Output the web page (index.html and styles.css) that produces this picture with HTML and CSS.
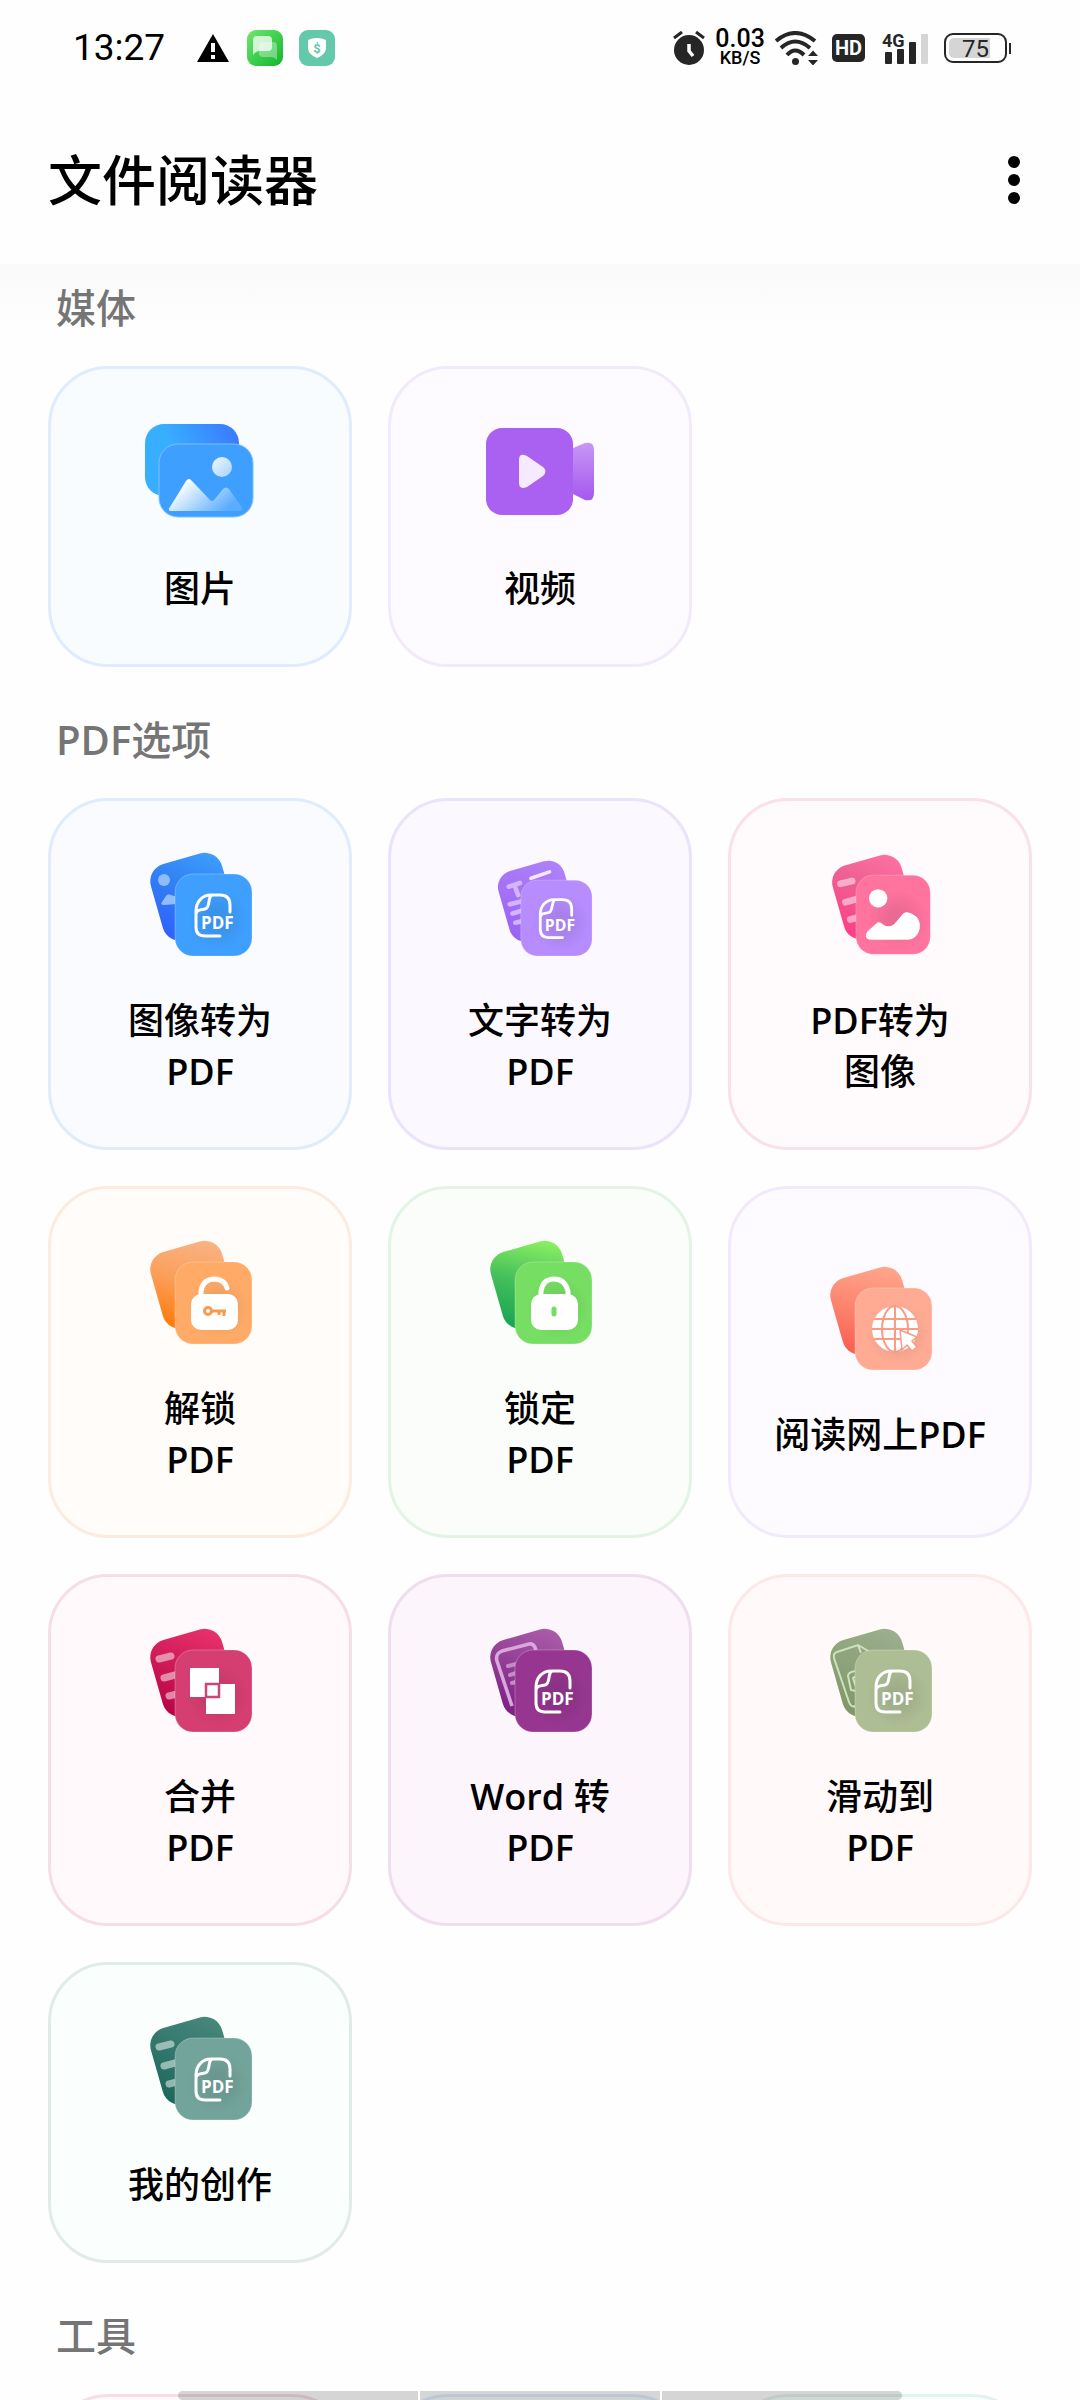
FILE: index.html
```html
<!DOCTYPE html>
<html lang="zh-CN">
<head>
    <meta charset="UTF-8">
    <meta name="viewport" content="width=device-width, initial-scale=1.0">
    <title>文件阅读器</title>
    <link rel="stylesheet" href="styles.css">
</head>
<body>

<!-- shared icon parts -->
<svg class="defs" width="0" height="0" aria-hidden="true">
    <defs>
        <linearGradient id="gPic" x1="0" y1="0.5" x2="1" y2="0.2"><stop offset="0.3" stop-color="#38aeff"/><stop offset="1" stop-color="#3a7bff"/></linearGradient>
        <linearGradient id="gSnow" x1="0" y1="0" x2="1" y2="0.5"><stop offset="0.2" stop-color="#fff"/><stop offset="1" stop-color="#fff" stop-opacity="0.15"/></linearGradient>
        <linearGradient id="gSun" x1="0" y1="0" x2="1" y2="1"><stop offset="0" stop-color="#f2f8ff"/><stop offset="1" stop-color="#a5d1ff"/></linearGradient>
        <linearGradient id="gLens" x1="0" y1="0" x2="0" y2="1"><stop offset="0" stop-color="#c797f5"/><stop offset="1" stop-color="#a557ef"/></linearGradient>
        <linearGradient id="gBlue" x1="1" y1="0" x2="0.2" y2="1"><stop offset="0" stop-color="#3fa2ff"/><stop offset="0.5" stop-color="#3280f3"/><stop offset="1" stop-color="#2f63fa"/></linearGradient>
        <linearGradient id="gViolet" x1="1" y1="0" x2="0.2" y2="1"><stop offset="0" stop-color="#b084fb"/><stop offset="1" stop-color="#9c63f3"/></linearGradient>
        <linearGradient id="gPink" x1="1" y1="0" x2="0.2" y2="1"><stop offset="0" stop-color="#ff73a3"/><stop offset="0.5" stop-color="#ee5f91"/><stop offset="1" stop-color="#ff3f86"/></linearGradient>
        <linearGradient id="gOrange" x1="0.8" y1="0" x2="0.3" y2="1"><stop offset="0" stop-color="#f9b384"/><stop offset="0.5" stop-color="#fb9e58"/><stop offset="1" stop-color="#ff7d10"/></linearGradient>
        <linearGradient id="gGreen" x1="0.8" y1="0" x2="0.3" y2="1"><stop offset="0" stop-color="#8af062"/><stop offset="0.5" stop-color="#45bf5a"/><stop offset="1" stop-color="#1ba654"/></linearGradient>
        <linearGradient id="gCoral" x1="0.8" y1="0" x2="0.3" y2="1"><stop offset="0" stop-color="#ffa68c"/><stop offset="0.5" stop-color="#fc8670"/><stop offset="1" stop-color="#fb6153"/></linearGradient>
        <linearGradient id="gCrimson" x1="1" y1="0" x2="0.2" y2="1"><stop offset="0" stop-color="#ea3570"/><stop offset="1" stop-color="#bb0646"/></linearGradient>
        <linearGradient id="gPurple" x1="1" y1="0" x2="0.2" y2="1"><stop offset="0" stop-color="#ac62ab"/><stop offset="1" stop-color="#7f2085"/></linearGradient>
        <linearGradient id="gOlive" x1="1" y1="0" x2="0.2" y2="1"><stop offset="0" stop-color="#9eb092"/><stop offset="1" stop-color="#809868"/></linearGradient>
        <linearGradient id="gTeal" x1="1" y1="0" x2="0.2" y2="1"><stop offset="0" stop-color="#4b897e"/><stop offset="1" stop-color="#1d685c"/></linearGradient>
        <linearGradient id="gChat" x1="0" y1="0" x2="1" y2="1"><stop offset="0" stop-color="#6ee86f"/><stop offset="1" stop-color="#12b52f"/></linearGradient>
        <radialGradient id="gShade"><stop offset="0.3" stop-color="#000" stop-opacity="0.08"/><stop offset="1" stop-color="#000" stop-opacity="0"/></radialGradient>
    </defs>
    <symbol id="back" viewBox="0 0 108 108" overflow="visible">
        <rect width="74" height="79" rx="18" transform="translate(0 19) rotate(-16)"/>
    </symbol>
    <symbol id="front" viewBox="0 0 108 108" overflow="visible">
        <rect x="29" y="24" width="77" height="82" rx="18" stroke="#fff" stroke-opacity="0.25"/>
        <circle cx="72" cy="70" r="31" fill="url(#gShade)"/>
    </symbol>
    <symbol id="lines" viewBox="0 0 108 108" overflow="visible">
        <path d="M13 33l12-3M18 52l11-3M23 70l8-2" stroke="#fff" stroke-opacity="0.5" stroke-width="7" stroke-linecap="round" fill="none"/>
    </symbol>
    <symbol id="page" viewBox="0 0 108 108" overflow="visible">
        <path class="line" d="M84 62V55Q84 45 74 45H65C56 45 50 52 50 61V77Q50 86 59 86H74M67 45C61 45 65 58 59 59S51 60 50 64"/>
    </symbol>
</svg>

<div class="status-bar">
    <div class="status-left">
        <span class="clock">13:27</span>
        <svg class="warn" width="32" height="28" viewBox="0 0 32 28"><path d="M16 0L32 28H0z"/><path d="M14 9h4v9h-4zM14 21h4v4h-4z" fill="#fff"/></svg>
        <svg width="36" height="36" viewBox="0 0 36 36"><rect width="36" height="36" rx="9" fill="url(#gChat)"/><path d="M6 25V10Q6 6 10 6H21Q25 6 25 10V17Q25 21 21 21H12Q9 21 6 25z" fill="#fff" fill-opacity="0.75"/><path d="M30 30V16Q30 12 26 12H16Q12 12 12 16V23Q12 27 16 27H24Q27 27 30 30z" fill="#fff" fill-opacity="0.35"/></svg>
        <svg width="36" height="36" viewBox="0 0 36 36"><rect width="36" height="36" rx="9" fill="#64c8aa"/><path d="M18 8Q23 8 27 10V19Q26 25 18 28Q10 25 9 19V10Q13 8 18 8z" fill="#fff"/><text class="dollar" x="18" y="23">$</text></svg>
    </div>
    <div class="status-right">
        <svg width="32" height="34" viewBox="0 0 32 34"><circle cx="16" cy="19" r="15" fill="#262626"/><path d="M1 7l8-6M31 7l-8-6" stroke="#262626" stroke-width="3"/><path d="M16 13v7l4 5" fill="none" stroke="#fff" stroke-width="3.500"/></svg>
        <div class="speed"><span class="rate">0.03</span><span class="unit">KB/S</span></div>
        <svg width="44" height="34" viewBox="0 0 44 34"><g fill="none" stroke="#262626" stroke-width="4"><path d="M1 10Q20-6 40 10"/><path d="M6 17Q20 4 35 17"/><path d="M12 24Q20 15 29 24"/></g><circle cx="20.500" cy="30.500" r="3.500" fill="#262626"/><path d="M33 25l5-5.500 5 5.500zM33 29l5 5.500 5-5.500z" fill="#262626"/></svg>
        <span class="hd">HD</span>
        <svg class="signal" width="46" height="34" viewBox="0 0 46 34"><text class="net" x="0" y="16">4G</text><rect x="3" y="21" width="7" height="12" rx="1"/><rect x="15" y="18" width="7" height="15" rx="1"/><rect x="27" y="11" width="7" height="22" rx="1"/><rect x="39" y="3" width="7" height="30" rx="1" fill="#d5d5d5"/></svg>
        <div class="battery"><span class="level">75</span></div>
    </div>
</div>

<header class="app-bar">
    <h1>文件阅读器</h1>
    <button class="more" type="button" aria-label="更多">
        <svg width="12" height="48" viewBox="0 0 12 48"><circle cx="6" cy="6" r="6"/><circle cx="6" cy="24" r="6"/><circle cx="6" cy="42" r="6"/></svg>
    </button>
</header>

<main class="content">
    <section>
        <h2>媒体</h2>
        <div class="grid">
            <button type="button" class="card sky">
                <svg class="icon" viewBox="0 0 108 108">
                    <rect x="-1" y="6" width="94" height="72" rx="19" fill="url(#gPic)"/>
                    <rect x="13" y="26" width="94" height="73" rx="19" fill="#3f9fff" stroke="#7fc0ff"/>
                    <circle cx="76" cy="49" r="10" fill="url(#gSun)"/>
                    <path d="M24 89L40 63Q43 59 46 63L64 82Q66 84 68 82L77 71Q80 68 83 71L95 88Q98 93 94 93H26Q21 93 24 89z" fill="url(#gSnow)"/>
                </svg>
                <span>图片</span>
            </button>
            <button type="button" class="card lilac">
                <svg class="icon" viewBox="0 0 108 108">
                    <path d="M87 30L99 25Q108 23 108 32V75Q108 84 99 82L87 76z" fill="url(#gLens)"/>
                    <rect y="10" width="87" height="87" rx="16" fill="#aa60f1"/>
                    <path d="M33 42Q33 34 41 38L57 49Q62 53 57 58L41 69Q33 72 33 65z" fill="#f5eaff"/>
                </svg>
                <span>视频</span>
            </button>
        </div>
    </section>

    <section>
        <h2><b>PDF</b>选项</h2>
        <div class="grid">
            <button type="button" class="card blue">
                <svg class="icon" viewBox="0 0 108 108">
                    <use href="#back" fill="url(#gBlue)"/>
                    <circle cx="18" cy="30" r="6" fill="#8dbcff"/>
                    <path d="M16 52l4-6q2-3 5-1l6 2v7l-13 1q-4 0-2-3z" fill="#8dbcff"/>
                    <use href="#front" fill="#3f9fff"/>
                    <use href="#page"/>
                    <text class="pdf-text" x="55" y="79">PDF</text>
                </svg>
                <span>图像转为<br><b>PDF</b></span>
            </button>
            <button type="button" class="card violet">
                <svg class="icon" viewBox="0 0 108 108">
                    <g transform="translate(8 8) scale(0.925)">
                        <use href="#back" fill="url(#gViolet)"/>
                        <path d="M16 31l12-4M22 29l4 11M17 50l12-3M20 60l10-3M23 70l8-2" stroke="#d3b5fd" stroke-width="5" stroke-linecap="round" fill="none"/>
                        <path d="M40 22l20-7" stroke="#f4e6ff" stroke-width="4" stroke-linecap="round"/>
                        <use href="#front" fill="#b68cff"/>
                        <use href="#page"/>
                        <text class="pdf-text" x="55" y="79">PDF</text>
                    </g>
                </svg>
                <span>文字转为<br><b>PDF</b></span>
            </button>
            <button type="button" class="card pink">
                <svg class="icon" viewBox="0 0 108 108">
                    <g transform="translate(2 2) scale(0.965)">
                        <use href="#back" fill="url(#gPink)"/>
                        <use href="#lines"/>
                        <use href="#front" fill="#ff739f"/>
                        <circle cx="52" cy="48" r="9.500" fill="#fff"/>
                        <path d="M41 82L50 74Q53 71 57 75Q65 80 71 72L76 66Q80 60 87 64Q97 69 95 80Q92 90 83 91H45Q36 90 41 82z" fill="#fff"/>
                    </g>
                </svg>
                <span><b>PDF</b>转为<br>图像</span>
            </button>
            <button type="button" class="card orange">
                <svg class="icon" viewBox="0 0 108 108">
                    <use href="#back" fill="url(#gOrange)"/>
                    <use href="#front" fill="#ffab67"/>
                    <rect x="45" y="56" width="47" height="36" rx="10" fill="#fff"/>
                    <path d="M55 58V53Q57 41 69 41Q79 42 81 50" class="shackle"/>
                    <circle cx="62" cy="73" r="3.500" fill="none" stroke="#fa9a52" stroke-width="3"/>
                    <path d="M66 73H80M78 73V78M73 73V77" fill="none" stroke="#fa9a52" stroke-width="3"/>
                </svg>
                <span>解锁<br><b>PDF</b></span>
            </button>
            <button type="button" class="card green">
                <svg class="icon" viewBox="0 0 108 108">
                    <use href="#back" fill="url(#gGreen)"/>
                    <use href="#front" fill="#76de62"/>
                    <rect x="45" y="56" width="47" height="36" rx="10" fill="#fff"/>
                    <path d="M55 58V53Q57 41 68 41Q79 41 82 53V58" class="shackle"/>
                    <path d="M68 71V76" stroke="#76de62" stroke-width="5" stroke-linecap="round"/>
                </svg>
                <span>锁定<br><b>PDF</b></span>
            </button>
            <button type="button" class="card lilac">
                <svg class="icon" viewBox="0 0 108 108">
                    <use href="#back" fill="url(#gCoral)"/>
                    <use href="#front" fill="#ffab94"/>
                    <circle cx="69" cy="65" r="23" fill="#fff"/>
                    <g fill="none" stroke="#fb9a85" stroke-width="2">
                        <path d="M69 42V88M46 65H92M48 55H90M48 75H90"/>
                        <ellipse cx="69" cy="65" rx="13" ry="23"/>
                    </g>
                    <path d="M74 66L91 73L86 77L91 83L86 87L81 81L76 86z" fill="#fff" stroke="#fb9a85" stroke-width="1.500"/>
                </svg>
                <span>阅读网上<b>PDF</b></span>
            </button>
            <button type="button" class="card rose">
                <svg class="icon" viewBox="0 0 108 108">
                    <use href="#back" fill="url(#gCrimson)"/>
                    <use href="#lines"/>
                    <use href="#front" fill="#d53e70"/>
                    <path d="M44 42h29v29H44zM60 58h29v30H60z" fill="#fff"/>
                    <rect x="60" y="58" width="13" height="13" fill="#fff" stroke="#cf4470" stroke-width="2.500"/>
                </svg>
                <span>合并<br><b>PDF</b></span>
            </button>
            <button type="button" class="card purple">
                <svg class="icon" viewBox="0 0 108 108">
                    <use href="#back" fill="url(#gPurple)"/>
                    <path d="M26 80L11 35Q9 28 16 25L43 18Q48 17 50 24" fill="none" stroke="#d9a8da" stroke-width="3.500"/>
                    <path d="M22 40l8-2M24 49l6-2M26 57l4-1" stroke="#c28bc3" stroke-width="4" stroke-linecap="round"/>
                    <use href="#front" fill="#963690"/>
                    <use href="#page"/>
                    <text class="pdf-text" x="55" y="79">PDF</text>
                </svg>
                <span><b>Word</b> 转<br><b>PDF</b></span>
            </button>
            <button type="button" class="card peach">
                <svg class="icon" viewBox="0 0 108 108">
                    <use href="#back" fill="url(#gOlive)"/>
                    <path d="M30 80Q25 82 23 76L8 32Q7 27 11 26L32 19L44 26M32 19L35 27M30 65L25 64L22 50Q22 46 30 45M30 61L27 52L30 50" fill="none" stroke="#cfe0bd" stroke-width="2"/>
                    <use href="#front" fill="#adbd94"/>
                    <use href="#page"/>
                    <text class="pdf-text" x="55" y="79">PDF</text>
                </svg>
                <span>滑动到<br><b>PDF</b></span>
            </button>
            <button type="button" class="card teal">
                <svg class="icon" viewBox="0 0 108 108">
                    <use href="#back" fill="url(#gTeal)"/>
                    <use href="#lines"/>
                    <use href="#front" fill="#73a49b"/>
                    <use href="#page"/>
                    <text class="pdf-text" x="55" y="79">PDF</text>
                </svg>
                <span>我的创作</span>
            </button>
        </div>
    </section>

    <section>
        <h2>工具</h2>
        <div class="grid">
            <div class="card rose"></div>
            <div class="card blue"></div>
            <div class="card mint"></div>
        </div>
    </section>
</main>

<div class="nav-hint"><i></i><i></i><i></i></div>

</body>
</html>
```

FILE: styles.css
```css
* {
    box-sizing: border-box;
}

body {
    margin: 0;
    height: 100vh;
    display: flex;
    flex-direction: column;
    overflow: hidden;
    background-color: #fefefe;
    color: #000;
    font-family: 'Open Sans', 'Noto Sans CJK SC', sans-serif;
}

.defs {
    position: absolute;
}

/* status bar */
.status-bar {
    display: flex;
    justify-content: space-between;
    align-items: center;
    flex-shrink: 0;
    height: 96px;
    padding: 0 73px;
    font-family: Roboto, sans-serif;
}

.status-left,
.status-right {
    display: flex;
    align-items: center;
}

.status-left {
    gap: 16px;
}

.status-right {
    gap: 10px;
}

.clock {
    font-size: 37px;
    line-height: 44px;
}

.warn {
    margin: 0 2px 0 16px;
}

.dollar {
    font: bold 13px Roboto, sans-serif;
    fill: #64c8aa;
    text-anchor: middle;
}

.speed {
    display: flex;
    flex-direction: column;
    align-items: center;
    font-weight: 500;
}

.rate {
    font-size: 25px;
    line-height: 20px;
}

.unit {
    font-size: 18px;
    line-height: 18px;
}

.hd {
    margin-left: 3px;
    padding: 0 3px;
    border-radius: 5px;
    background-color: #262626;
    color: #fff;
    font-size: 20px;
    font-weight: 700;
    line-height: 28px;
}

.signal {
    margin: 0 6px 0 7px;
    fill: #262626;
}

.net {
    font: bold 18px Roboto, sans-serif;
}

.battery {
    position: relative;
    width: 63px;
    height: 30px;
    padding: 3px;
    border: 2px solid #262626;
    border-radius: 9px;
}

.battery::after {
    content: "";
    position: absolute;
    top: 8px;
    right: -6px;
    width: 2px;
    height: 11px;
    background-color: #262626;
}

.level {
    display: block;
    width: 41px;
    height: 20px;
    padding-left: 13px;
    border-radius: 5px 0 0 5px;
    background-color: #d5d5d5;
    color: #262626;
    font-size: 24px;
    line-height: 22px;
}

/* title bar */
.app-bar {
    display: flex;
    justify-content: space-between;
    align-items: center;
    flex-shrink: 0;
    height: 168px;
    padding: 0 48px;
}

h1 {
    margin: 0;
    font-size: 54px;
    font-weight: 500;
    line-height: 72px;
}

.more {
    display: flex;
    padding: 12px;
    border: none;
    background: none;
    cursor: pointer;
}

/* list */
.content {
    flex: 1;
    min-height: 0;
    padding: 14px 48px 0;
    overflow-y: scroll;
    scrollbar-width: none;
    background: linear-gradient(#f9f9f9, #fefefe 60px);
}

section + section {
    margin-top: 43px;
}

h2 {
    margin: 0 0 28px;
    padding-left: 8px;
    color: #757575;
    font-size: 40px;
    font-weight: 500;
    line-height: 60px;
}

h2 b,
.card b {
    font-weight: 600;
}

.grid {
    display: grid;
    grid-template-columns: repeat(3, 1fr);
    gap: 36px;
}

.card {
    display: flex;
    flex-direction: column;
    align-items: center;
    justify-content: center;
    gap: 37px;
    min-height: 301px;
    padding: 49px 16px;
    border: 3px solid;
    border-radius: 60px;
    font-family: inherit;
    font-size: 36px;
    font-weight: 500;
    line-height: 51px;
    text-align: center;
}

button.card {
    padding-bottom: 50px;
    cursor: pointer;
}

.card span {
    color: #000;
}

.icon {
    width: 108px;
    height: 108px;
    overflow: visible;
}

.line {
    fill: none;
    stroke: #fff;
    stroke-width: 3;
    stroke-linecap: round;
}

.shackle {
    fill: none;
    stroke: #fff;
    stroke-width: 5;
    stroke-linecap: round;
}

.pdf-text {
    font: 700 17px 'Open Sans', sans-serif;
    fill: #fff;
}

.sky {
    background-color: #f8fcff;
    border-color: #e0ecfd;
}

.blue {
    background-color: #f9fbff;
    border-color: #e0ecfd;
}

.lilac {
    background-color: #fdfbff;
    border-color: #f2eafb;
}

.violet {
    background-color: #fbf8ff;
    border-color: #ebe3fb;
}

.pink {
    background-color: #fffafc;
    border-color: #fae0e8;
}

.orange {
    background-color: #fffcf9;
    border-color: #fcebde;
}

.green {
    background-color: #fbfdfb;
    border-color: #e3f4e5;
}

.rose {
    background-color: #fff9fb;
    border-color: #f5dee5;
}

.purple {
    background-color: #fcf5fc;
    border-color: #eedeee;
}

.peach {
    background-color: #fff9f9;
    border-color: #fde8e7;
}

.teal {
    background-color: #fafffd;
    border-color: #e1ebe9;
}

.mint {
    background-color: #f8fffd;
    border-color: #e0f3f0;
}

/* gesture hint over the list */
.nav-hint {
    position: fixed;
    bottom: 0;
    left: 178px;
    right: 178px;
    display: flex;
    gap: 2px;
    height: 9px;
    border-radius: 5px;
    overflow: hidden;
}

.nav-hint i {
    flex: 1;
    background-color: rgba(0, 0, 0, 0.16);
}
```
